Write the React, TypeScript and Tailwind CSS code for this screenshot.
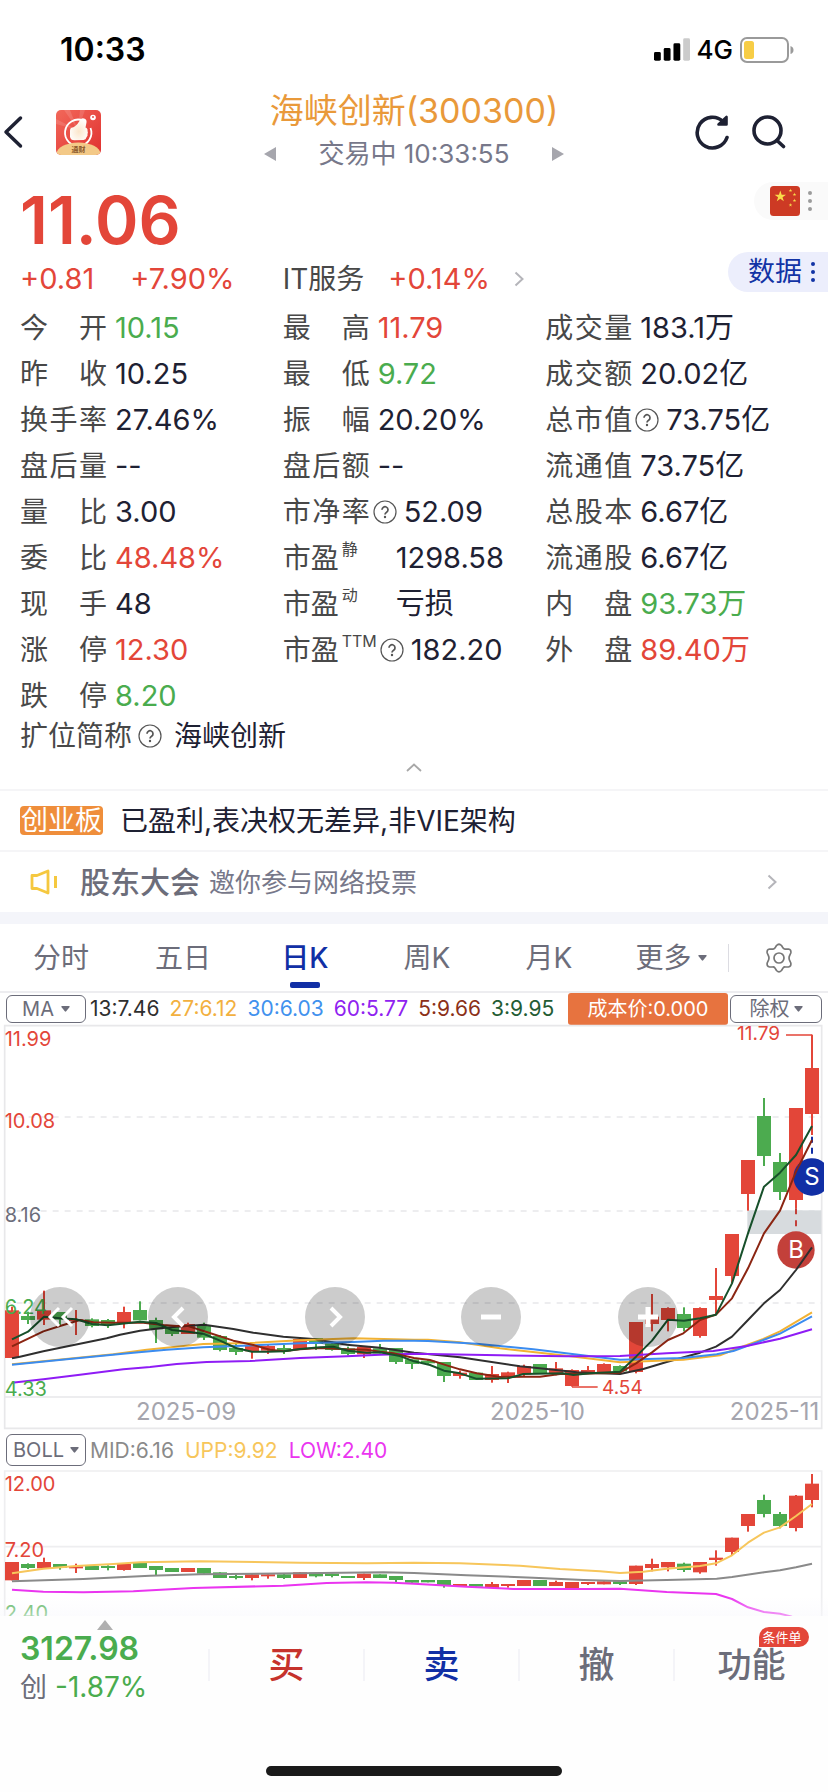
import React from "react";

type Tone = "up" | "down" | "plain";

const toneClass: Record<Tone, string> = {
  up: "text-[#e34639]",
  down: "text-[#4aac4e]",
  plain: "text-[#1e2133]",
};

interface Stat {
  label: string;
  value: string;
  tone?: Tone;
  help?: boolean;
  sup?: string;
}

const statColumns: Stat[][] = [
  [
    { label: "今开", value: "10.15", tone: "down" },
    { label: "昨收", value: "10.25" },
    { label: "换手率", value: "27.46%" },
    { label: "盘后量", value: "--" },
    { label: "量比", value: "3.00" },
    { label: "委比", value: "48.48%", tone: "up" },
    { label: "现手", value: "48" },
    { label: "涨停", value: "12.30", tone: "up" },
    { label: "跌停", value: "8.20", tone: "down" },
  ],
  [
    { label: "最高", value: "11.79", tone: "up" },
    { label: "最低", value: "9.72", tone: "down" },
    { label: "振幅", value: "20.20%" },
    { label: "盘后额", value: "--" },
    { label: "市净率", value: "52.09", help: true },
    { label: "市盈", value: "1298.58", sup: "静" },
    { label: "市盈", value: "亏损", sup: "动" },
    { label: "市盈", value: "182.20", sup: "TTM", help: true },
  ],
  [
    { label: "成交量", value: "183.1万" },
    { label: "成交额", value: "20.02亿" },
    { label: "总市值", value: "73.75亿", help: true },
    { label: "流通值", value: "73.75亿" },
    { label: "总股本", value: "6.67亿" },
    { label: "流通股", value: "6.67亿" },
    { label: "内盘", value: "93.73万", tone: "down" },
    { label: "外盘", value: "89.40万", tone: "up" },
  ],
];

/* [direction, body top, body bottom, wick top, wick bottom] */
type Candle = [1 | 0, number, number, number, number];

const dayCandles: Candle[] = [
  [1, 871, 1014, 860, 1014], [0, 888, 900, 875, 912], [1, 871, 899, 812, 915], [0, 876, 899, 876, 918],
  [1, 898, 903, 870, 945], [0, 898, 918, 895, 922], [0, 900, 914, 897, 924], [1, 876, 907, 860, 925],
  [0, 870, 901, 844, 901], [0, 900, 928, 893, 969], [0, 920, 942, 920, 948], [1, 912, 942, 908, 942],
  [0, 918, 953, 908, 960], [0, 948, 990, 945, 994], [0, 984, 996, 972, 1005], [1, 976, 994, 976, 1016],
  [1, 978, 992, 975, 1002], [0, 984, 994, 975, 1002], [1, 957, 987, 951, 987], [0, 954, 972, 954, 990],
  [0, 970, 990, 965, 992], [0, 985, 1002, 980, 1006], [1, 981, 1003, 978, 1014], [0, 985, 1000, 972, 1000],
  [0, 984, 1026, 984, 1032], [0, 1018, 1032, 1018, 1047], [0, 1022, 1030, 1018, 1033], [0, 1026, 1068, 1026, 1086],
  [1, 1058, 1068, 1052, 1076], [0, 1058, 1080, 1058, 1080], [1, 1062, 1080, 1038, 1088], [1, 1057, 1068, 1055, 1089],
  [1, 1038, 1063, 1034, 1068], [0, 1032, 1062, 1032, 1062], [1, 1045, 1060, 1026, 1066], [1, 1050, 1098, 1048, 1100],
  [1, 1050, 1060, 1038, 1062], [1, 1032, 1056, 1030, 1058], [0, 1038, 1054, 1036, 1058], [1, 906, 1056, 906, 1060],
  [1, 890, 912, 822, 934], [1, 864, 900, 862, 934], [0, 882, 924, 862, 934], [1, 864, 948, 862, 953],
  [1, 828, 840, 744, 882], [1, 642, 768, 642, 790], [1, 420, 522, 420, 572], [0, 288, 408, 234, 438],
  [0, 426, 516, 399, 540], [1, 264, 540, 264, 565], [1, 144, 282, 44, 345],
];

const bollCandles: Candle[] = [
  [1, 426, 481, 426, 481], [0, 432, 444, 430, 447], [1, 426, 445, 413, 445], [0, 432, 443, 432, 449],
  [1, 439, 445, 431, 459], [0, 438, 450, 438, 450], [0, 438, 444, 436, 451], [1, 432, 450, 429, 452],
  [0, 428, 444, 428, 444], [0, 438, 450, 438, 466], [0, 444, 456, 444, 456], [1, 444, 456, 444, 456],
  [0, 444, 461, 444, 461], [0, 457, 474, 457, 474], [0, 468, 474, 464, 478], [1, 463, 474, 463, 481],
  [1, 463, 469, 463, 476], [0, 463, 474, 462, 477], [1, 457, 474, 457, 474], [0, 458, 469, 458, 472],
  [0, 461, 468, 461, 472], [0, 468, 474, 468, 474], [1, 461, 474, 461, 480], [0, 463, 474, 463, 474],
  [0, 468, 480, 468, 486], [0, 480, 488, 480, 488], [0, 480, 487, 480, 487], [0, 480, 497, 480, 503],
  [1, 492, 498, 492, 498], [0, 492, 500, 492, 500], [1, 492, 504, 486, 504], [1, 492, 498, 492, 503],
  [1, 480, 498, 480, 498], [0, 480, 498, 480, 498], [1, 486, 498, 482, 498], [1, 486, 507, 486, 507],
  [1, 486, 492, 486, 495], [1, 484, 493, 484, 493], [0, 484, 492, 484, 495], [1, 437, 492, 437, 495],
  [1, 432, 444, 416, 454], [1, 426, 442, 426, 454], [0, 431, 450, 428, 456], [1, 426, 457, 426, 461],
  [1, 413, 420, 391, 437], [1, 353, 396, 353, 405], [1, 282, 318, 282, 335], [0, 240, 282, 224, 292],
  [0, 282, 318, 276, 325], [1, 227, 324, 225, 334], [1, 191, 240, 162, 262],
];

const maLines = [
  { color: "#2f2f2f", points: "36,1015 60,1010 130,994 320,955 360,944 420,932 480,925 530,920 612,914 700,927 760,938 850,950 940,957 1040,974 1140,983 1242,998 1290,1003 1380,1012 1560,1039 1640,1047 1730,1057 1860,1062 1930,1047 2000,1026 2100,998 2148,980 2196,950 2244,900 2292,850 2340,810 2388,750 2436,682" },
  { color: "#f2b233", points: "36,1033 160,1021 340,1003 440,989 610,972 750,969 900,961 1060,955 1242,959 1284,959 1380,967 1500,985 1700,1007 1860,1027 2050,1019 2160,1006 2200,990 2290,957 2340,934 2436,877" },
  { color: "#3b8cf0", points: "36,1034 200,1018 400,998 500,989 610,982 900,970 1060,966 1150,962 1242,962 1284,963 1430,971 1600,988 1760,1007 1860,1019 2050,1014 2150,1003 2200,993 2290,960 2340,941 2436,889" },
  { color: "#8f1cf5", points: "36,1088 130,1078 240,1064 370,1048 450,1041 530,1032 620,1026 750,1023 900,1014 1040,1009 1140,1004 1242,1001 1500,1006 1700,1009 1860,1008 2000,1000 2140,993 2240,978 2340,956 2436,928" },
  { color: "#8b2512", points: "36,979 130,934 180,918 240,900 280,907 340,908 430,908 490,915 530,918 560,917 620,936 700,962 760,975 810,989 850,994 900,988 960,984 1040,988 1100,989 1140,995 1180,1000 1242,1014 1290,1020 1340,1036 1380,1048 1430,1060 1500,1071 1570,1070 1620,1070 1680,1062 1720,1062 1860,1058 1908,1030 1956,997 2004,960 2050,940 2100,900 2148,884 2196,835 2244,745 2292,640 2340,572 2388,455 2436,360" },
  { color: "#17502a", points: "36,958 84,935 132,890 180,895 228,898 276,912 324,916 420,905 468,909 516,930 564,935 612,942 660,962 708,984 756,995 804,995 852,994 900,987 960,982 1000,980 1044,992 1100,998 1140,997 1200,1008 1242,1024 1290,1035 1332,1052 1380,1060 1428,1076 1524,1075 1570,1062 1690,1060 1720,1065 1770,1060 1860,1055 1908,1010 1956,962 2004,899 2052,902 2100,895 2148,884 2196,790 2244,640 2292,500 2340,458 2388,405 2436,318" },
];

const bollLines = [
  { color: "#f7c65b", points: "36,460 130,446 228,438 340,432 420,427 600,424 900,428 1100,430 1242,428 1380,430 1560,437 1680,447 1800,454 1860,459 1930,455 2000,446 2100,438 2148,430 2196,406 2244,368 2292,338 2340,322 2388,288 2436,252" },
  { color: "#8a8a8a", points: "36,484 250,477 450,467 600,463 900,460 1150,457 1242,459 1400,466 1600,473 1750,480 1860,483 2000,480 2150,476 2196,471 2292,457 2340,451 2388,442 2436,431" },
  { color: "#ea35f0", points: "36,509 130,515 250,517 400,514 580,504 850,497 980,489 1100,487 1180,488 1242,491 1400,500 1540,507 1760,507 1860,506 2000,516 2148,522 2196,537 2244,562 2292,576 2340,581 2376,590" },
];

const maLegend = [
  { text: "13:7.46", className: "text-[#2f2f2f]" },
  { text: "27:6.12", className: "text-[#f2b040]" },
  { text: "30:6.03", className: "text-[#4191ee]" },
  { text: "60:5.77", className: "text-[#8f22f0]" },
  { text: "5:9.66", className: "text-[#8b3018]" },
  { text: "3:9.95", className: "text-[#245c34]" },
];

function Candles({ data }: { data: Candle[] }) {
  return (
    <g>
      {data.map(([up, top, bottom, high, low], i) => {
        const x = 36 + i * 48;
        const color = up ? "#e34639" : "#4cab4f";
        return (
          <g key={i} fill={color}>
            <rect x={x - 3} y={high} width={6} height={low - high} />
            <rect x={x - 21} y={top} width={42} height={bottom - top} />
          </g>
        );
      })}
    </g>
  );
}

function Lines({ data }: { data: { color: string; points: string }[] }) {
  return (
    <g fill="none" strokeWidth={6} strokeLinejoin="round">
      {data.map((line) => (
        <polyline key={line.color} points={line.points} stroke={line.color} />
      ))}
    </g>
  );
}

function Help() {
  return (
    <svg className="h-6 w-6 shrink-0" viewBox="0 0 24 24" fill="none" stroke="#555" strokeWidth="1.2" aria-hidden="true">
      <circle cx="12" cy="12" r="11" />
      <path d="M9 9.800a3 3 0 1 1 4.600 2.500c-1.100.7-1.600 1.200-1.600 2.300" strokeWidth="1.700" />
      <circle cx="12" cy="17" r="0.600" fill="#555" />
    </svg>
  );
}

function ChevronRight() {
  return (
    <svg className="h-4 w-[10px] shrink-0" viewBox="0 0 10 16" fill="none" stroke="#b5b5ba" strokeWidth="2" aria-hidden="true">
      <path d="M1.500 1.500 8.500 8l-7 6.500" />
    </svg>
  );
}

function Caret() {
  return (
    <svg className="h-[6px] w-[9px] shrink-0" viewBox="0 0 9 6" fill="#6c6d7a" aria-hidden="true">
      <path d="M0.800 0h7.400q.8.3.4 1L5.200 5.300q-.7.7-1.400 0L.4 1Q0 .3.8 0z" />
    </svg>
  );
}

function StatRow({ stat }: { stat: Stat }) {
  const tone = toneClass[stat.tone ?? "plain"];
  return (
    <div className="flex h-[46px] items-center">
      <dt
        className={
          stat.sup
            ? "flex min-w-[105px] items-center text-[#484848]"
            : "flex items-center text-[#484848]"
        }
      >
        <span className={stat.sup ? "" : "flex w-[87px] justify-between"}>
          {stat.sup ? stat.label : [...stat.label].map((c, i) => <span key={i}>{c}</span>)}
        </span>
        {stat.sup && <sup className="top-0 ml-[3px] self-start text-base leading-4">{stat.sup}</sup>}
        {stat.help && <span className="ml-[3px]"><Help /></span>}
      </dt>
      <dd className={`whitespace-nowrap text-[29px] ${stat.help ? "ml-[7px]" : "ml-2"} ${tone}`}>{stat.value}</dd>
    </div>
  );
}

function StatusBar() {
  return (
    <div className="flex h-[88px] items-center justify-between pl-[60px] pr-[34px] pt-3">
      <span className="text-[32px] font-semibold leading-10 text-black">10:33</span>
      <div className="flex items-center gap-[7px]">
        <svg className="h-6 w-9" viewBox="0 0 37 24" aria-hidden="true">
          <rect x="0" y="14" width="7" height="9" rx="1.500" />
          <rect x="10" y="10" width="7" height="13" rx="1.500" />
          <rect x="20" y="5" width="7" height="18" rx="1.500" />
          <rect x="30" y="0" width="7" height="23" rx="1.500" fill="#cbcbcb" />
        </svg>
        <span className="text-[26px] font-medium leading-8 text-black">4G</span>
        <svg className="h-[26px] w-[54px]" viewBox="0 0 54 26" aria-hidden="true">
          <rect x="1" y="1" width="47" height="24" rx="6" fill="none" stroke="#9a9a9a" strokeWidth="2" />
          <rect x="4" y="4" width="10" height="18" rx="2.500" fill="#f7cd46" />
          <path d="M50.500 9q3 1 3 4t-3 4z" fill="#9a9a9a" />
        </svg>
      </div>
    </div>
  );
}

function AppLogo() {
  return (
    <svg className="h-[45px] w-[45px]" viewBox="0 0 45 45" aria-hidden="true">
      <defs>
        <linearGradient id="logoRed" x1="0" y1="0" x2="1" y2="1">
          <stop offset="0" stopColor="#f2685a" />
          <stop offset="1" stopColor="#e0302f" />
        </linearGradient>
        <radialGradient id="logoThumb" cx="0.5" cy="0.6" r="0.6">
          <stop offset="0" stopColor="#fbe6cc" />
          <stop offset="1" stopColor="#ffffff" />
        </radialGradient>
        <clipPath id="logoClip">
          <rect width="45" height="45" rx="5" />
        </clipPath>
      </defs>
      <g clipPath="url(#logoClip)">
        <rect width="45" height="45" fill="url(#logoRed)" />
        <path d="M22 20 8 0h6zM22 20 24 0h5zM22 20 0 14v-5z" fill="#fff" opacity="0.130" />
        <path d="M27 10.500A13.200 13.200 0 1 0 34.500 18" fill="none" stroke="#fff" strokeWidth="1.800" />
        <path d="M15 18q5-1 8.500-7 1.500-3.500 4.500-2.500 3 .8 2.500 4L29.500 17.500q2.500 1 2 3.500.8 1.500 0 3 .5 2-1 3.200-.5 2.500-3 2.800l-9 .2q-4 0-4.500-3.500v-6q0-2 1-2.700z" fill="url(#logoThumb)" />
        <circle cx="37" cy="7.500" r="2.800" fill="#fff" />
        <circle cx="37" cy="7" r="1" fill="#e8504a" />
        <ellipse cx="22.500" cy="44" rx="22" ry="11.500" fill="#f3c987" />
        <text x="22.500" y="41.500" textAnchor="middle" fontSize="7" fontWeight="700" fill="#8b5a2b">通财</text>
      </g>
    </svg>
  );
}

function Header() {
  return (
    <header className="grid h-[88px] grid-cols-[1fr_auto_1fr] items-center">
      <div className="flex items-center gap-[33px] pl-[3px]">
        <button type="button" aria-label="返回">
          <svg className="h-[34px] w-5" viewBox="0 0 20 34" fill="none" stroke="#1e2133" strokeWidth="3.500" strokeLinecap="round" strokeLinejoin="round">
            <path d="M17.500 3 3 17l14.500 14" />
          </svg>
        </button>
        <AppLogo />
      </div>
      <div className="flex flex-col items-center">
        <h1 className="whitespace-nowrap text-[34px] leading-[43px] text-[#e9993a]">海峡创新(300300)</h1>
        <div className="flex items-center gap-[42px]">
          <button type="button" aria-label="上一只">
            <svg className="h-[14px] w-3" viewBox="0 0 12 14" fill="#a6a6ad"><path d="M12 0v14L0 7z" /></svg>
          </button>
          <p className="whitespace-nowrap text-[26px] leading-[43px] text-[#77788a]">交易中 10:33:55</p>
          <button type="button" aria-label="下一只">
            <svg className="h-[14px] w-3" viewBox="0 0 12 14" fill="#a6a6ad"><path d="M0 0v14l12-7z" /></svg>
          </button>
        </div>
      </div>
      <div className="flex items-center justify-end gap-[23px] pr-[42px]">
        <button type="button" aria-label="刷新">
          <svg className="h-9 w-[34px]" viewBox="0 0 34 36" fill="none" stroke="#1e2133" strokeWidth="3.600" strokeLinecap="round" strokeLinejoin="round">
            <path d="M32 23.500A15.300 15.300 0 1 1 28 7.500" />
            <path d="M31.500 3v7.500h-8z" fill="#1e2133" strokeWidth="2.600" />
          </svg>
        </button>
        <button type="button" aria-label="搜索">
          <svg className="h-9 w-[34px]" viewBox="0 0 34 36" fill="none" stroke="#1e2133" strokeWidth="3.600" strokeLinecap="round">
            <circle cx="15.500" cy="16.500" r="13.500" />
            <path d="m25 26.500 6.500 6" />
          </svg>
        </button>
      </div>
    </header>
  );
}

function Flag() {
  const star = "0,-10 2.3,-3.1 9.5,-3.1 3.7,1.200 5.900,8.100 0,3.800 -5.900,8.100 -3.700,1.200 -9.500,-3.100 -2.300,-3.100";
  const small = [[20.500, 4.500], [24.500, 8.500], [24.500, 14.500], [20.500, 19]];
  return (
    <svg className="h-[30px] w-[30px]" viewBox="0 0 30 30" aria-hidden="true">
      <rect width="30" height="30" rx="3.500" fill="#cd3a24" />
      <g fill="#f9dc4a">
        <polygon points={star} transform="translate(10.300 10.500) scale(0.600)" />
        {small.map(([x, y]) => (
          <polygon key={`${x}-${y}`} points={star} transform={`translate(${x} ${y}) scale(0.190)`} />
        ))}
      </g>
    </svg>
  );
}

function Dots({ className }: { className: string }) {
  return (
    <svg className={`h-[22px] w-[6px] ${className}`} viewBox="0 0 6 22" fill="currentColor" aria-hidden="true">
      <circle cx="3" cy="3" r="2" />
      <circle cx="3" cy="11" r="2" />
      <circle cx="3" cy="19" r="2" />
    </svg>
  );
}

function Quote() {
  return (
    <section className="text-[28px] leading-[34px]">
      <div className="flex h-[76px] items-start justify-between pl-5">
        <p className="pt-3 text-[66px] font-semibold leading-[64px] text-[#e34639]">11.06</p>
        <button type="button" aria-label="市场" className="mt-[6px] flex h-[38px] items-center gap-[7px] rounded-l-full bg-[#fafafa] pl-4 pr-[15px]">
          <Flag />
          <Dots className="text-[#9b9b9b]" />
        </button>
      </div>
      <div className="grid h-[53px] grid-cols-3 px-5">
        <p className="flex items-center gap-9 text-[29px] text-[#e34639]">
          <span>+0.81</span>
          <span>+7.90%</span>
        </p>
        <a href="#industry" className="flex items-center gap-6 whitespace-nowrap text-[28px] text-[#484848]">
          IT服务<span className="text-[29px] text-[#e34639]">+0.14%</span>
          <ChevronRight />
        </a>
        <button type="button" className="-mr-5 flex h-10 items-center gap-2 self-start justify-self-end rounded-l-full bg-[#eceefc] pl-5 pr-3 text-[27px] text-[#1233a5]">
          数据
          <Dots className="text-[#1233a5]" />
        </button>
      </div>
      <div className="grid grid-cols-3 px-5">
        {statColumns.map((column, i) => (
          <dl key={i}>
            {column.map((stat) => (
              <StatRow key={stat.label + (stat.sup ?? "")} stat={stat} />
            ))}
          </dl>
        ))}
      </div>
      <dl className="flex h-[34px] items-center px-5">
        <dt className="flex items-center gap-[6px] text-[#484848]">扩位简称<Help /></dt>
        <dd className="ml-3 text-[#1e2133]">海峡创新</dd>
      </dl>
      <button type="button" aria-label="收起" className="flex h-9 w-full items-center justify-center pb-2">
        <svg className="h-[9px] w-4" viewBox="0 0 16 9" fill="none" stroke="#a8a8a8" strokeWidth="1.800">
          <path d="m1 8 7-6.500L15 8" />
        </svg>
      </button>
    </section>
  );
}

function Notices() {
  return (
    <section>
      <div className="flex h-[61px] items-center gap-[17px] border-t-2 border-[#f5f5f7] px-5">
        <span className="rounded bg-[#ef8e3b] px-px text-[27px] leading-[29px] text-white">创业板</span>
        <span className="whitespace-nowrap text-[28px] text-[#1e2133]">已盈利,表决权无差异,非VIE架构</span>
      </div>
      <a href="#meeting" className="flex h-[62px] items-center border-t-2 border-[#f5f5f7] pl-[30px] pr-[51px]">
        <svg className="h-[26px] w-7" viewBox="0 0 28 26" fill="none" stroke="#f5c83f" strokeWidth="2.800" aria-hidden="true">
          <path d="M2 6.500h5L18 2v22L7 19.500H2z" strokeLinejoin="round" />
          <path d="M25.500 7v12" strokeWidth="3" />
        </svg>
        <strong className="ml-[22px] text-[30px] font-medium text-[#6c6d7a]">股东大会</strong>
        <span className="ml-[9px] text-[26px] text-[#77788a]">邀你参与网络投票</span>
        <span className="ml-auto"><ChevronRight /></span>
      </a>
      <div className="h-3 bg-[#f4f5fa]" />
    </section>
  );
}

const tabs = ["分时", "五日", "日K", "周K", "月K"];

function PeriodTabs() {
  return (
    <nav className="flex h-[69px] items-stretch border-b-2 border-[#ededf0] text-[28px] text-[#6c6d7a]">
      {tabs.map((tab) => {
        const active = tab === "日K";
        return (
          <button
            type="button"
            key={tab}
            aria-pressed={active}
            className={
              active
                ? "relative min-w-0 flex-1 whitespace-nowrap font-medium text-[#112fa5]"
                : "min-w-0 flex-1 whitespace-nowrap"
            }
          >
            {tab}
            {active && <span className="absolute bottom-[3px] left-1/2 h-[6px] w-[30px] -translate-x-1/2 rounded-[2px] bg-[#112fa5]" />}
          </button>
        );
      })}
      <button type="button" className="flex min-w-0 flex-1 items-center justify-center gap-[6px] whitespace-nowrap">
        更多<Caret />
      </button>
      <div className="-ml-1 flex w-[100px] items-center">
        <span className="h-7 w-px bg-[#dcdce2]" />
        <button type="button" aria-label="设置" className="ml-[35px]">
          <svg className="h-[30px] w-[30px]" viewBox="0 0 30 30" fill="none" stroke="#777" strokeWidth="1.700" strokeLinejoin="round">
            <path d="M12.500 2.500q2.500-2.500 5 0l1.600 2.600q.8 1.100 2.100 1l3.200-.1q3 .4 2.400 4l-1.400 3.100q-.7 1.900 0 3.800l1.400 3.100q.6 3.600-2.400 4l-3.200-.1q-1.300-.1-2.100 1l-1.600 2.600q-2.500 2.500-5 0l-1.600-2.600q-.8-1.100-2.100-1l-3.200.1q-3-.4-2.400-4l1.400-3.100q.7-1.900 0-3.800L3.200 10q-.6-3.600 2.400-4l3.200.1q1.300.1 2.100-1z" />
            <circle cx="15" cy="15" r="5" />
          </svg>
        </button>
      </div>
    </nav>
  );
}

function DayChart() {
  const control = "absolute top-[64.800%] flex aspect-square w-[7.250%] items-center justify-center rounded-full bg-black/20";
  const glyph = { className: "h-1/2 w-1/2", viewBox: "0 0 30 30", fill: "none", stroke: "#fff", strokeWidth: 4 } as const;
  return (
    <section>
      <div className="flex h-8 items-center px-[6px] text-[20px] leading-7">
        <button type="button" className="flex h-7 w-20 items-center justify-center gap-[7px] rounded-md border border-[#6c6d7a] text-[#6c6d7a]">
          MA<Caret />
        </button>
        <p className="ml-1 flex gap-[10px] whitespace-nowrap text-[21px]">
          {maLegend.map((item) => (
            <span key={item.text} className={item.className}>{item.text}</span>
          ))}
        </p>
        <button type="button" className="ml-auto h-8 w-40 whitespace-nowrap rounded-[3px] bg-[#e7733f] text-white">成本价:0.000</button>
        <button type="button" className="ml-[2px] flex h-7 w-[92px] items-center justify-center gap-1 rounded-md border border-[#6c6d7a] text-[#6c6d7a]">
          除权<Caret />
        </button>
      </div>
      <div className="relative">
        <svg className="block h-auto w-full overflow-visible" viewBox="0 15 2484 1215" role="img" aria-label="日K线图">
          <g fill="none" stroke="#e8e8ea" strokeWidth="5">
            <path d="M14 1225V17H2465V1225ZM14 1131H2465" />
            <path d="M14 291H2465M14 573H2465M14 849H2465" strokeDasharray="18 18" />
          </g>
          <rect x="2242" y="571" width="222" height="71" fill="#d7dbde" />
          <Candles data={dayCandles} />
          <path d="M2358 45H2436M1716 1101H1793" stroke="#e34639" strokeWidth="5" />
          <path d="M2436 350V405" stroke="#112fa5" strokeWidth="6" strokeDasharray="18 15" />
          <path d="M2388 565V622" stroke="#c3403a" strokeWidth="6" strokeDasharray="18 18" />
          <path d="M2472 428V514A56 56 0 1 1 2472 428Z" fill="#112fa5" />
          <circle cx="2388" cy="690" r="56" fill="#c3403a" />
          <Lines data={maLines} />
          <g fontSize="72" fill="#fff" textAnchor="middle">
            <text x="2436" y="496">S</text>
            <text x="2388" y="715">B</text>
          </g>
          <g fontSize="60">
            <text x="14" y="77" fill="#e34639">11.99</text>
            <text x="14" y="323" fill="#e34639">10.08</text>
            <text x="14" y="605" fill="#6c6d7a">8.16</text>
            <text x="14" y="881" fill="#4aac4e">6.24</text>
            <text x="14" y="1127" fill="#4aac4e">4.33</text>
          </g>
          <g fontSize="57" fill="#e34639">
            <text x="2340" y="59" textAnchor="end">11.79</text>
            <text x="1806" y="1121">4.54</text>
          </g>
          <g fontSize="72" fill="#a5a5ae">
            <text x="408" y="1201">2025-09</text>
            <text x="1470" y="1201">2025-10</text>
            <text x="2458" y="1201" textAnchor="end">2025-11</text>
          </g>
        </svg>
        <button type="button" aria-label="最左" className={`${control} left-[3.600%]`}>
          <svg {...glyph}><path d="M14 6 5 15l9 9M27 6l-9 9 9 9" strokeWidth="3" /></svg>
        </button>
        <button type="button" aria-label="左移" className={`${control} left-[17.900%]`}>
          <svg {...glyph}><path d="m20 6-9 9 9 9" /></svg>
        </button>
        <button type="button" aria-label="右移" className={`${control} left-[36.800%]`}>
          <svg {...glyph}><path d="m11 6 9 9-9 9" /></svg>
        </button>
        <button type="button" aria-label="缩小" className={`${control} left-[55.700%]`}>
          <svg {...glyph}><path d="M5 15h20" strokeWidth="5" /></svg>
        </button>
        <button type="button" aria-label="放大" className={`${control} left-[74.600%]`}>
          <svg {...glyph}><path d="M5 15h20M15 5v20" strokeWidth="5" /></svg>
        </button>
      </div>
    </section>
  );
}

function BollChart() {
  return (
    <section>
      <div className="flex h-10 items-center pl-[6px] text-[20px] leading-7">
        <button type="button" className="flex h-8 w-20 items-center justify-center gap-[6px] rounded-md border border-[#6c6d7a] text-[#6c6d7a]">
          BOLL<Caret />
        </button>
        <p className="ml-1 flex gap-[11px] whitespace-nowrap pt-[2px] text-[21px]">
          <span className="text-[#8a8a8a]">MID:6.16</span>
          <span className="text-[#f7c65b]">UPP:9.92</span>
          <span className="text-[#ea35f0]">LOW:2.40</span>
        </p>
      </div>
      <svg className="block h-auto w-full" viewBox="0 150 2484 438" role="img" aria-label="BOLL指标图">
        <defs>
          <linearGradient id="bollFade" x1="0" y1="0" x2="0" y2="1">
            <stop offset="0" stopColor="#f8f8fc" stopOpacity="0" />
            <stop offset="1" stopColor="#f8f8fc" stopOpacity="0.500" />
          </linearGradient>
        </defs>
        <path d="M14 600V153H2465V600M14 380H2465" fill="none" stroke="#eeeef0" strokeWidth="5" />
        <Candles data={bollCandles} />
        <Lines data={bollLines} />
        <g fontSize="60">
          <text x="14" y="212" fill="#e34639">12.00</text>
          <text x="14" y="410" fill="#e34639">7.20</text>
          <text x="14" y="601" fill="#5cb661">2.40</text>
        </g>
        <rect x="0" y="530" width="2484" height="58" fill="url(#bollFade)" />
      </svg>
    </section>
  );
}

function BottomBar() {
  const action = "flex h-8 items-center justify-center border-l-2 border-[#f4f4f8] text-[36px] font-medium leading-8";
  return (
    <footer className="h-[176px] bg-[#fefefe]">
      <div className="grid h-[98px] grid-cols-[208px_1fr_1fr_1fr_1fr] items-center">
        <button type="button" className="flex h-full flex-col items-start pl-5 text-left">
          <svg className="ml-[77px] mt-1 h-[10px] w-4" viewBox="0 0 16 10" fill="#b0b0b0" aria-hidden="true">
            <path d="M8 0l8 10H0z" />
          </svg>
          <span className="text-[32px] font-semibold leading-[38px] text-[#4aac4e]">3127.98</span>
          <span className="text-[28px] leading-[38px] text-[#4aac4e]"><span className="mr-2 text-[27px] text-[#6c6d7a]">创</span>-1.87%</span>
        </button>
        <button type="button" className={`${action} text-[#c6322c]`}>买</button>
        <button type="button" className={`${action} text-[#112fa5]`}>卖</button>
        <button type="button" className={`${action} text-[#6c6d7a]`}>撤</button>
        <button type="button" className="relative flex h-8 items-center justify-center border-l-2 border-[#f4f4f8] text-[34px] font-medium leading-8 text-[#6c6d7a]">
          功能
          <span className="absolute -top-[22px] right-[19px] flex h-5 w-[50px] items-center justify-center rounded-full rounded-bl-none bg-[#e34639] pr-1 text-[13px] font-normal leading-5 text-white">条件单</span>
        </button>
      </div>
      <div className="mx-auto mt-[52px] h-[10px] w-[296px] rounded-full bg-[#1a1a1a]" />
    </footer>
  );
}

export default function App() {
  return (
    <main className="w-full overflow-x-hidden bg-white font-['Inter','Noto_Sans_CJK_SC',sans-serif]" lang="zh-CN">
      <StatusBar />
      <Header />
      <Quote />
      <Notices />
      <PeriodTabs />
      <DayChart />
      <BollChart />
      <BottomBar />
    </main>
  );
}
